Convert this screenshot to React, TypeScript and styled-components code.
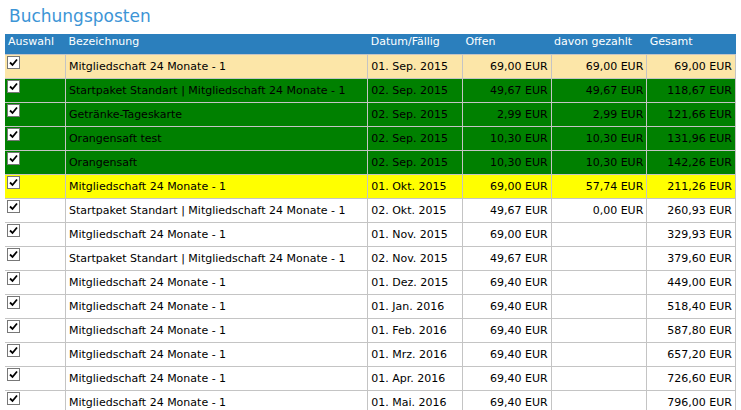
import React from "react";
import styled, { createGlobalStyle } from "styled-components";

const Global = createGlobalStyle`
  body { margin: 0; background: #fff; font-family: "DejaVu Sans", Verdana, sans-serif; }
`;

const Page = styled.div`
  padding: 6px 5px 0 5px;
  width: 741px;
  box-sizing: border-box;
  overflow: hidden;
`;

const Title = styled.h1`
  margin: 0 0 7px 4px;
  font-size: 17px;
  font-weight: normal;
  color: #3d95d6;
  line-height: 21px;
`;

const Table = styled.table`
  border-collapse: collapse;
  width: 731px;
  font-size: 11px;
  table-layout: fixed;
`;

const Th = styled.th<{ w: number }>`
  width: ${(p) => p.w - 7}px;
  background: #2b7fbd;
  color: #fff;
  font-weight: normal;
  text-align: left;
  height: 20px;
  padding: 0 3px;
  vertical-align: top;
  line-height: 16px;
  border: none;
  white-space: nowrap;
`;

const bg: Record<string, string> = {
  tan: "#fce6a8",
  green: "#008000",
  yellow: "#ffff00",
  white: "#ffffff",
};

const Tr = styled.tr<{ tone: string }>`
  background: ${(p) => bg[p.tone]};
  color: #000;
`;

const Td = styled.td<{ right?: boolean }>`
  height: 23px;
  border: 1px solid #c4c4c4;
  padding: 0 3px;
  text-align: ${(p) => (p.right ? "right" : "left")};
  white-space: nowrap;
  overflow: hidden;
  vertical-align: middle;
`;

const CheckCell = styled.td`
  height: 23px;
  border: 1px solid #c4c4c4;
  border-left: none;
  padding: 0 0 0 2px;
  vertical-align: top;
`;

const Box = styled.span`
  display: inline-flex;
  align-items: center;
  justify-content: center;
  width: 13px;
  height: 13px;
  margin-top: 1px;
  box-sizing: border-box;
  border: 1px solid #777;
  background: #fff;
`;

const Check = () => (
  <Box>
    <svg width="9" height="9" viewBox="0 0 9 9">
      <path d="M1 4.5 L3.5 7 L8 1.5" stroke="#000" strokeWidth="1.8" fill="none" />
    </svg>
  </Box>
);

type Row = [string, string, string, string, string, string];
const rows: Row[] = [
  ["tan", "Mitgliedschaft 24 Monate - 1", "01. Sep. 2015", "69,00 EUR", "69,00 EUR", "69,00 EUR"],
  ["green", "Startpaket Standart | Mitgliedschaft 24 Monate - 1", "02. Sep. 2015", "49,67 EUR", "49,67 EUR", "118,67 EUR"],
  ["green", "Getränke-Tageskarte", "02. Sep. 2015", "2,99 EUR", "2,99 EUR", "121,66 EUR"],
  ["green", "Orangensaft test", "02. Sep. 2015", "10,30 EUR", "10,30 EUR", "131,96 EUR"],
  ["green", "Orangensaft", "02. Sep. 2015", "10,30 EUR", "10,30 EUR", "142,26 EUR"],
  ["yellow", "Mitgliedschaft 24 Monate - 1", "01. Okt. 2015", "69,00 EUR", "57,74 EUR", "211,26 EUR"],
  ["white", "Startpaket Standart | Mitgliedschaft 24 Monate - 1", "02. Okt. 2015", "49,67 EUR", "0,00 EUR", "260,93 EUR"],
  ["white", "Mitgliedschaft 24 Monate - 1", "01. Nov. 2015", "69,00 EUR", "", "329,93 EUR"],
  ["white", "Startpaket Standart | Mitgliedschaft 24 Monate - 1", "02. Nov. 2015", "49,67 EUR", "", "379,60 EUR"],
  ["white", "Mitgliedschaft 24 Monate - 1", "01. Dez. 2015", "69,40 EUR", "", "449,00 EUR"],
  ["white", "Mitgliedschaft 24 Monate - 1", "01. Jan. 2016", "69,40 EUR", "", "518,40 EUR"],
  ["white", "Mitgliedschaft 24 Monate - 1", "01. Feb. 2016", "69,40 EUR", "", "587,80 EUR"],
  ["white", "Mitgliedschaft 24 Monate - 1", "01. Mrz. 2016", "69,40 EUR", "", "657,20 EUR"],
  ["white", "Mitgliedschaft 24 Monate - 1", "01. Apr. 2016", "69,40 EUR", "", "726,60 EUR"],
  ["white", "Mitgliedschaft 24 Monate - 1", "01. Mai. 2016", "69,40 EUR", "", "796,00 EUR"],
];

export default function App() {
  return (
    <>
      <Global />
      <Page>
        <Title>Buchungsposten</Title>
        <Table>
          <thead>
            <tr>
              <Th w={61}>Auswahl</Th>
              <Th w={301}>Bezeichnung</Th>
              <Th w={95}>Datum/Fällig</Th>
              <Th w={89}>Offen</Th>
              <Th w={96}>davon gezahlt</Th>
              <Th w={89}>Gesamt</Th>
            </tr>
          </thead>
          <tbody>
            {rows.map((r, i) => (
              <Tr key={i} tone={r[0]}>
                <CheckCell><Check /></CheckCell>
                <Td>{r[1]}</Td>
                <Td>{r[2]}</Td>
                <Td right>{r[3]}</Td>
                <Td right>{r[4]}</Td>
                <Td right>{r[5]}</Td>
              </Tr>
            ))}
          </tbody>
        </Table>
      </Page>
    </>
  );
}
